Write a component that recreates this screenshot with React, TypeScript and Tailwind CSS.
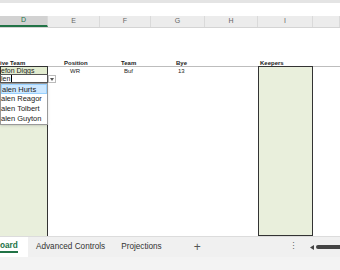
const cols = [
  { l: "D", w: 48 },
  { l: "E", w: 52 },
  { l: "F", w: 51 },
  { l: "G", w: 54 },
  { l: "H", w: 53 },
  { l: "I", w: 55 },
  { l: "", w: 27 },
];

const players = ["alen Hurts", "alen Reagor", "alen Tolbert", "alen Guyton"];

export default function App() {
  return (
    <div className="w-[340px] h-[270px] bg-white overflow-hidden flex flex-col font-['Liberation_Sans',sans-serif] text-[#222]">
      <div className="h-[3px] bg-[#e4e4e4]" />
      <div className="h-[13px] bg-white" />
      {/* column headers */}
      <div className="flex h-[12px] bg-[#ececec] border-b border-[#d4d4d4] text-[7px] text-[#666]">
        {cols.map((c, i) => (
          <div
            key={i}
            style={{ width: c.w }}
            className={`flex items-center justify-center border-r border-[#dadada] ${
              i === 0 ? "bg-[#d2d2d2] border-b-2 border-b-[#217346] text-[#217346]" : ""
            }`}
          >
            {c.l}
          </div>
        ))}
      </div>

      {/* sheet body */}
      <div className="relative flex-1">
        {/* header row */}
        <div className="absolute left-0 top-[31px] flex text-[6px] font-bold underline">
          <div className="w-[48px]">ive Team</div>
          <div className="w-[52px] pl-[16px]">Position</div>
          <div className="w-[51px] pl-[21px]">Team</div>
          <div className="w-[54px] pl-[25px]">Bye</div>
          <div className="w-[53px]" />
          <div className="w-[55px] pl-[2px]">Keepers</div>
        </div>
        <div className="absolute left-[48px] right-0 top-[38px] h-px bg-[#bdbdbd]" />

        {/* D column green */}
        <div className="absolute left-0 top-[38px] w-[48px] h-[170px] bg-[#e9efdc] border-r border-[#333]" />
        {/* keepers box */}
        <div className="absolute left-[258px] top-[38px] w-[55px] h-[170px] bg-[#e9efdc] border border-[#333]" />

        {/* row 2 */}
        <div className="absolute left-0 top-[38px] w-[48px] h-[9px] border border-[#333] bg-[#e2ecd0] text-[7px] leading-[7px]">
          efon Diggs
        </div>
        <div className="absolute left-[70px] top-[40px] text-[6px] leading-[6px]">WR</div>
        <div className="absolute left-[124px] top-[40px] text-[6px] leading-[6px]">Buf</div>
        <div className="absolute left-[178px] top-[40px] text-[6px] leading-[6px]">13</div>

        {/* dropdown */}
        <div className="absolute left-0 top-[46px] w-[48px] h-[9px] bg-white border border-[#555] text-[7px] leading-[7px] flex items-center">
          len<span className="inline-block w-px h-[7px] bg-black ml-px" />
        </div>
        <div className="absolute left-[48px] top-[47px] w-[8px] h-[8px] bg-white border border-[#bbb] flex items-center justify-center">
          <svg width="4" height="3" viewBox="0 0 4 3">
            <path d="M0 0h4L2 3z" fill="#555" />
          </svg>
        </div>
        <div className="absolute left-0 top-[55px] w-[48px] h-[42px] bg-white border border-[#999] shadow-sm text-[7.5px]">
          {players.map((p, i) => (
            <div
              key={p}
              className={`h-[10px] leading-[10px] ${i === 0 ? "bg-[#cde8ff] border border-[#99d1ff]" : ""}`}
            >
              {p}
            </div>
          ))}
        </div>
      </div>

      {/* sheet tabs */}
      <div className="h-[21px] bg-[#f0f0f0] border-t border-[#dcdcdc] flex items-center text-[8.2px] text-[#333]">
        <div className="h-full w-[28px] bg-white flex items-end pb-[4px]">
          <span className="border-b-2 border-[#217346] font-bold text-[#217346] leading-[11px]">oard</span>
        </div>
        <div className="ml-[8px]">Advanced Controls</div>
        <div className="ml-[16px]">Projections</div>
        <div className="ml-[32px] text-[12px] text-[#555]">+</div>
        <div className="ml-auto mr-[12px] text-[#666] text-[9px]">⋮</div>
        <div className="flex items-center w-[30px] gap-[1px]">
          <svg width="5" height="5" viewBox="0 0 5 5">
            <path d="M4 0v5L0 2.5z" fill="#444" />
          </svg>
          <div className="flex-1 h-[4px] rounded-l-full bg-[#444]" />
        </div>
      </div>
      <div className="h-[13px] bg-[#f3f3f3]" />
    </div>
  );
}
